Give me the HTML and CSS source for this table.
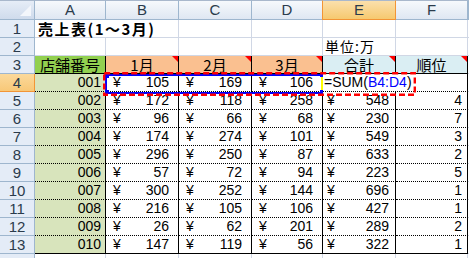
FILE: index.html
```html
<!DOCTYPE html>
<html>
<head>
    <title>売上表</title>
    <link rel="stylesheet" href="styles.css">
</head>
<body>
    <div class="sheet">
        <!-- column headers -->
        <div class="corner"></div>
        <div class="hd">A</div>
        <div class="hd">B</div>
        <div class="hd">C</div>
        <div class="hd">D</div>
        <div class="hd sel">E</div>
        <div class="hd">F</div>
        <div class="hd"></div>

        <!-- 1 -->
        <div class="rh">1</div>
        <div class="c title">売上表(1〜3月)</div>
        <div class="c"></div>
        <div class="c"></div>
        <div class="c"></div>
        <div class="c"></div>
        <div class="c edge"></div>

        <!-- 2 -->
        <div class="rh">2</div>
        <div class="c"></div>
        <div class="c"></div>
        <div class="c"></div>
        <div class="c"></div>
        <div class="c unit">単位:万</div>
        <div class="c"></div>
        <div class="c edge"></div>

        <!-- 3 -->
        <div class="rh">3</div>
        <div class="th th-id">店舗番号</div>
        <div class="th th-month note">1月</div>
        <div class="th th-month note">2月</div>
        <div class="th th-month note">3月</div>
        <div class="th th-sum note">合計</div>
        <div class="th th-sum note">順位</div>
        <div class="c edge"></div>

        <!-- 4 : formula being typed in E4 -->
        <div class="rh sel">4</div>
        <div class="id">001</div>
        <div class="yen"><span>¥</span><span>105</span></div>
        <div class="yen"><span>¥</span><span>169</span></div>
        <div class="yen"><span>¥</span><span>106</span></div>
        <div class="formula">=SUM(<span class="ref">B4:D4</span>)</div>
        <div class="c edge"></div>

        <div class="rh">5</div>
        <div class="id">002</div>
        <div class="yen"><span>¥</span><span>172</span></div>
        <div class="yen"><span>¥</span><span>118</span></div>
        <div class="yen"><span>¥</span><span>258</span></div>
        <div class="yen total"><span>¥</span><span>548</span></div>
        <div class="rank">4</div>
        <div class="c edge"></div>

        <div class="rh">6</div>
        <div class="id">003</div>
        <div class="yen"><span>¥</span><span>96</span></div>
        <div class="yen"><span>¥</span><span>66</span></div>
        <div class="yen"><span>¥</span><span>68</span></div>
        <div class="yen total"><span>¥</span><span>230</span></div>
        <div class="rank">7</div>
        <div class="c edge"></div>

        <div class="rh">7</div>
        <div class="id">004</div>
        <div class="yen"><span>¥</span><span>174</span></div>
        <div class="yen"><span>¥</span><span>274</span></div>
        <div class="yen"><span>¥</span><span>101</span></div>
        <div class="yen total"><span>¥</span><span>549</span></div>
        <div class="rank">3</div>
        <div class="c edge"></div>

        <div class="rh">8</div>
        <div class="id">005</div>
        <div class="yen"><span>¥</span><span>296</span></div>
        <div class="yen"><span>¥</span><span>250</span></div>
        <div class="yen"><span>¥</span><span>87</span></div>
        <div class="yen total"><span>¥</span><span>633</span></div>
        <div class="rank">2</div>
        <div class="c edge"></div>

        <div class="rh">9</div>
        <div class="id">006</div>
        <div class="yen"><span>¥</span><span>57</span></div>
        <div class="yen"><span>¥</span><span>72</span></div>
        <div class="yen"><span>¥</span><span>94</span></div>
        <div class="yen total"><span>¥</span><span>223</span></div>
        <div class="rank">5</div>
        <div class="c edge"></div>

        <div class="rh">10</div>
        <div class="id">007</div>
        <div class="yen"><span>¥</span><span>300</span></div>
        <div class="yen"><span>¥</span><span>252</span></div>
        <div class="yen"><span>¥</span><span>144</span></div>
        <div class="yen total"><span>¥</span><span>696</span></div>
        <div class="rank">1</div>
        <div class="c edge"></div>

        <div class="rh">11</div>
        <div class="id">008</div>
        <div class="yen"><span>¥</span><span>216</span></div>
        <div class="yen"><span>¥</span><span>105</span></div>
        <div class="yen"><span>¥</span><span>106</span></div>
        <div class="yen total"><span>¥</span><span>427</span></div>
        <div class="rank">1</div>
        <div class="c edge"></div>

        <div class="rh">12</div>
        <div class="id">009</div>
        <div class="yen"><span>¥</span><span>26</span></div>
        <div class="yen"><span>¥</span><span>62</span></div>
        <div class="yen"><span>¥</span><span>201</span></div>
        <div class="yen total"><span>¥</span><span>289</span></div>
        <div class="rank">2</div>
        <div class="c edge"></div>

        <div class="rh">13</div>
        <div class="id last">010</div>
        <div class="yen last"><span>¥</span><span>147</span></div>
        <div class="yen last"><span>¥</span><span>119</span></div>
        <div class="yen last"><span>¥</span><span>56</span></div>
        <div class="yen total last"><span>¥</span><span>322</span></div>
        <div class="rank last">1</div>
        <div class="c edge"></div>

        <!-- next row, only its top edge shows -->
        <div class="rh"></div>
        <div class="c"></div>
        <div class="c"></div>
        <div class="c"></div>
        <div class="c"></div>
        <div class="c"></div>
        <div class="c"></div>
        <div class="c edge"></div>
    </div>

    <!-- range highlight for the formula and the marker drawn round it -->
    <svg class="marks" width="469" height="258" viewBox="0 0 469 258">
        <rect x="106" y="75" width="216" height="18" fill="none" stroke="#0000ff" stroke-width="2"/>
        <rect x="321" y="76" width="2" height="15" fill="#ffff00"/>
        <rect x="105" y="74" width="4" height="4" fill="#0000ff"/>
        <rect x="105" y="90" width="4" height="4" fill="#0000ff"/>
        <rect x="320" y="74" width="3" height="3" fill="#0000ff"/>
        <rect x="320" y="90" width="3" height="3" fill="#0000ff"/>
        <rect x="104.2" y="73.2" width="310.6" height="21.6" fill="none" stroke="#ff0000" stroke-width="2.4" stroke-dasharray="6 3"/>
    </svg>
</body>
</html>
```

FILE: styles.css
```css
body {
    margin: 0;
    background-color: #ffffff;
    color: #000000;
    font-family: "Liberation Sans", "Noto Sans CJK JP", sans-serif;
    font-size: 14px;
    overflow: hidden;
    position: relative;
}
.sheet {
    display: grid;
    grid-template-columns: 35px 71px 73px 73px 71px 73px 72px 1fr;
    grid-template-rows: 20px repeat(14, 18px);
    height: 258px;
    overflow: hidden;
}
.sheet > div {
    box-sizing: border-box;
    border-right: 1px solid #d0d7e5;
    border-bottom: 1px solid #d0d7e5;
    line-height: 17px;
    white-space: nowrap;
    position: relative;
}
.sheet > .edge {
    border-right: none;
}

/* headers */
.corner {
    background: linear-gradient(#e6edf7, #cfdbec);
    border-top: 1px solid #a9b8cc;
}
.sheet > .corner {
    border-right: 1px solid #9eb6ce;
    border-bottom: 1px solid #9eb6ce;
}
.corner::after {
    content: "";
    position: absolute;
    right: 3px;
    bottom: 3px;
    border-style: solid;
    border-width: 0 0 11px 11px;
    border-color: transparent transparent #f3f6fb transparent;
}
.hd {
    background: linear-gradient(#f6f9fc, #dfe7f2);
    border-top: 1px solid #a9b8cc;
    color: #2a3b4c;
    text-align: center;
    font-size: 15px;
}
.sheet > .hd {
    border-right: 1px solid #9eb6ce;
    border-bottom: 1px solid #9eb6ce;
}
.sheet > .hd.sel {
    background: linear-gradient(#fbe0ac, #f6c96f);
    border-left: 1px solid #f29536;
    border-right: 1px solid #f29536;
    border-bottom: 1px solid #f29536;
    margin-left: -1px;
}
.rh {
    background-color: #e4ecf7;
    color: #2a3b4c;
    text-align: center;
    font-size: 15px;
}
.sheet > .rh {
    border-right: 1px solid #9eb6ce;
    border-bottom: 1px solid #9eb6ce;
}
.sheet > .rh.sel {
    background: linear-gradient(#fbd99b, #f8c878);
    border-bottom-color: #f29536;
    border-right-color: #f29536;
}

/* title rows */
.title {
    grid-column: span 2;
    padding-left: 3px;
    font-family: "Noto Sans CJK JP", sans-serif;
    font-size: 15px;
    font-weight: bold;
    letter-spacing: 1.5px;
}
.unit {
    padding-left: 2px;
    font-family: "Noto Sans CJK JP", sans-serif;
    font-size: 14px;
    letter-spacing: 1px;
}

/* table head */
.th {
    text-align: center;
    font-family: "Noto Sans CJK JP", sans-serif;
    font-size: 15px;
}
.sheet > .th {
    border-right: 1px solid #000000;
    border-bottom: 1px solid #000000;
}
.th-id {
    background-color: #92d050;
}
.th-month {
    background-color: #fac090;
}
.th-sum {
    background-color: #daeef3;
}
.note::after {
    content: "";
    position: absolute;
    top: 0;
    right: 0;
    border-style: solid;
    border-width: 0 6px 6px 0;
    border-color: transparent #ff0000 transparent transparent;
}

/* data */
.sheet > .id,
.sheet > .yen,
.sheet > .rank,
.sheet > .formula {
    border-right: 1px solid #000000;
    border-bottom: 1px dotted #000000;
}
.sheet > .last {
    border-bottom: 1px solid #000000;
}
.id {
    background-color: #d8e4bc;
    text-align: right;
    padding-right: 4px;
}
.yen {
    display: flex;
    justify-content: space-between;
    padding: 0 9px 0 7px;
}
.yen.total {
    padding: 0 6px 0 4px;
}
.rank {
    text-align: right;
    padding-right: 5px;
}
.formula {
    grid-column: span 2;
    padding-left: 1px;
    background-color: #ffffff;
}
.ref {
    color: #0000ff;
}

.marks {
    position: absolute;
    left: 0;
    top: 0;
    pointer-events: none;
}
```
